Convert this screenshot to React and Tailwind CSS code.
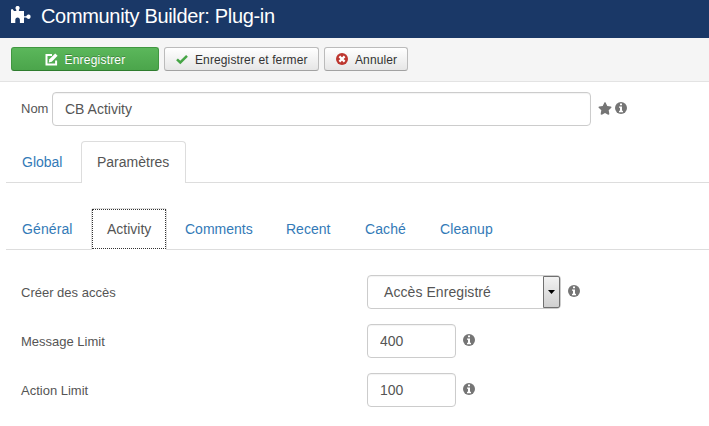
import React from 'react';
import { FaStar } from 'react-icons/fa';

const PuzzleIcon = () => (
  <svg className="h-[18px] w-5 shrink-0" viewBox="0 0 20 18" fill="#fff">
    <path d="M0 4.500l1.500-.5L3 6h2.300V4.800C3.800 3.200 4.600 1 6.600 1s2.800 2.200 1.300 3.800V6H13v5.300h2.200c.6-1.200 1.500-1.700 2.500-1.700 1.200 0 1.900.9 1.900 2.100s-.7 2.200-1.900 2.200c-1 0-1.900-.5-2.500-1.400H13V18H8.900v-2.900c0-1.600-.9-2.500-2.300-2.500s-2.300.9-2.300 2.500V18H0z" />
  </svg>
);

const EditIcon = () => (
  <svg className="h-[13px] w-[13px] shrink-0" viewBox="0 0 13 13" fill="none">
    <path d="M7 2H1.500v9.500h9.600V7.500" stroke="#fff" strokeWidth="2" />
    <path d="M3.700 9.400l.7-3.100L10.200.5l2.400 2.300-5.800 5.900z" fill="#fff" />
  </svg>
);

const CheckIcon = () => (
  <svg className="h-[11px] w-3 shrink-0" viewBox="0 0 12 11" fill="none">
    <path d="M1 5.300l3.300 3.200L11 1.800" stroke="#46a546" strokeWidth="2.500" />
  </svg>
);

const CancelIcon = () => (
  <svg className="h-3 w-3 shrink-0" viewBox="0 0 12 12">
    <circle cx="6" cy="6" r="6" fill="#bd362f" />
    <path d="M3.400 3.400l5.200 5.200M8.600 3.400L3.400 8.600" stroke="#fff" strokeWidth="2.200" />
  </svg>
);

const Info = () => (
  <svg className="mb-[2px] h-3 w-3 shrink-0" viewBox="0 0 12 12">
    <circle cx="6" cy="6" r="6" fill="#757575" />
    <path d="M5 1.500h2v1.800H5zM4 4.400h3v4.300h1v1.500H4V8.700h1V5.800H4z" fill="#fff" />
  </svg>
);

function Field({ label, children }) {
  return (
    <div className="flex h-[34px] items-center">
      <div className="w-[346px] pt-[2px] text-[13px] leading-5">{label}</div>
      {children}
    </div>
  );
}

function TextBox({ value, className }) {
  return (
    <input
      readOnly
      value={value}
      className={`h-[34px] rounded border border-[#ccc] bg-white px-3 text-sm text-[#555] shadow-[inset_0_1px_1px_rgba(0,0,0,0.05)] outline-none ${className}`}
    />
  );
}

export default function App() {
  return (
    <div className="h-[426px] w-[709px] overflow-hidden bg-white font-['Liberation_Sans',Arial,sans-serif] text-[#555]">
      <header className="flex h-[38px] items-start bg-[#1a3867] pl-[11px] pt-[5px] text-white">
        <PuzzleIcon />
        <h1 className="ml-[10px] whitespace-nowrap text-[20px] leading-[22px] tracking-[-0.33px]">Community Builder: Plug-in</h1>
      </header>

      <div className="flex h-11 gap-[5px] border-b border-[#e3e3e3] bg-[#f5f5f5] pl-[11px] pt-[9px] text-xs text-[#333]">
        <button className="flex h-6 w-[148px] items-center justify-center gap-[7px] rounded-[3px] border border-[#409740] border-b-[#2e7c2e] bg-linear-to-b from-[#5bb75b] to-[#4ba54b] text-white">
          <EditIcon />
          <span className="pt-px tracking-[0.2px] [text-shadow:0_-1px_0_rgba(0,0,0,0.25)]">Enregistrer</span>
        </button>
        <button className="flex h-6 w-[155px] items-center gap-[7px] whitespace-nowrap rounded-[3px] border border-[#bbb] border-b-[#a2a2a2] bg-linear-to-b from-white to-[#e6e6e6] pl-[11px]">
          <CheckIcon />
          <span className="pt-px tracking-[0.12px]">Enregistrer et fermer</span>
        </button>
        <button className="flex h-6 w-[84px] items-center gap-[7px] rounded-[3px] border border-[#bbb] border-b-[#a2a2a2] bg-linear-to-b from-white to-[#e6e6e6] pl-[11px]">
          <CancelIcon />
          <span className="pt-px tracking-[0.1px]">Annuler</span>
        </button>
      </div>

      <div className="mt-[10px] flex h-[34px] items-center pl-[21px]">
        <label className="w-[31px] text-[13px]">Nom</label>
        <TextBox value="CB Activity" className="w-[539px]" />
        <FaStar className="mb-[2px] ml-[7px] h-[13px] w-[14px] text-[#757575]" />
        <span className="ml-[3px] flex"><Info /></span>
      </div>

      <nav className="ml-[6px] mt-[15px] flex h-[42px] border-b border-[#ddd] text-sm leading-5 text-[#337ab7]">
        <a className="mr-[2px] w-[73px] px-4 pt-[11px]">Global</a>
        <a className="h-[42px] w-[105px] rounded-t border border-b-0 border-[#ddd] bg-white px-[15px] pt-[10px] text-[#555]">Paramètres</a>
      </nav>

      <nav className="ml-[6px] mt-[25px] flex h-[42px] gap-[2px] border-b border-[#ddd] text-sm leading-5 text-[#337ab7]">
        <a className="w-[83px] px-4 pt-[11px] tracking-[0.1px]">Général</a>
        <a className="h-[42px] w-[76px] rounded-t-[3px] border border-b-0 border-[#ddd] bg-white text-[#555]">
          <span className="block h-10 w-[74px] border border-dotted border-[#333] px-[14px] pt-[9px]">Activity</span>
        </a>
        <a className="w-[99px] px-4 pt-[11px]">Comments</a>
        <a className="w-[77px] px-4 pt-[11px]">Recent</a>
        <a className="w-[73px] px-4 pt-[11px] tracking-[0.1px]">Caché</a>
        <a className="w-[86px] px-4 pt-[11px] tracking-[0.1px]">Cleanup</a>
      </nav>

      <main className="flex flex-col gap-[15px] pl-[21px] pt-[25px]">
        <Field label="Créer des accès">
          <div className="mr-[7px] flex h-[34px] w-[194px] items-center justify-between rounded border border-[#ccc] pl-4 text-sm shadow-[inset_0_1px_1px_rgba(0,0,0,0.05)]">
            <span className="tracking-[0.07px]">Accès Enregistré</span>
            <span className="flex h-8 w-[17px] items-center justify-center rounded-r-[2px] border border-[#707070] bg-linear-to-b from-[#f2f2f2] to-[#d0d0d0]">
              <svg className="h-1 w-[7px]" viewBox="0 0 7 4"><path d="M0 0h7L3.500 4z" fill="#000" /></svg>
            </span>
          </div>
          <Info />
        </Field>
        <Field label="Message Limit">
          <TextBox value="400" className="mr-[7px] w-[89px]" />
          <Info />
        </Field>
        <Field label="Action Limit">
          <TextBox value="100" className="mr-[7px] w-[89px]" />
          <Info />
        </Field>
      </main>
    </div>
  );
}
